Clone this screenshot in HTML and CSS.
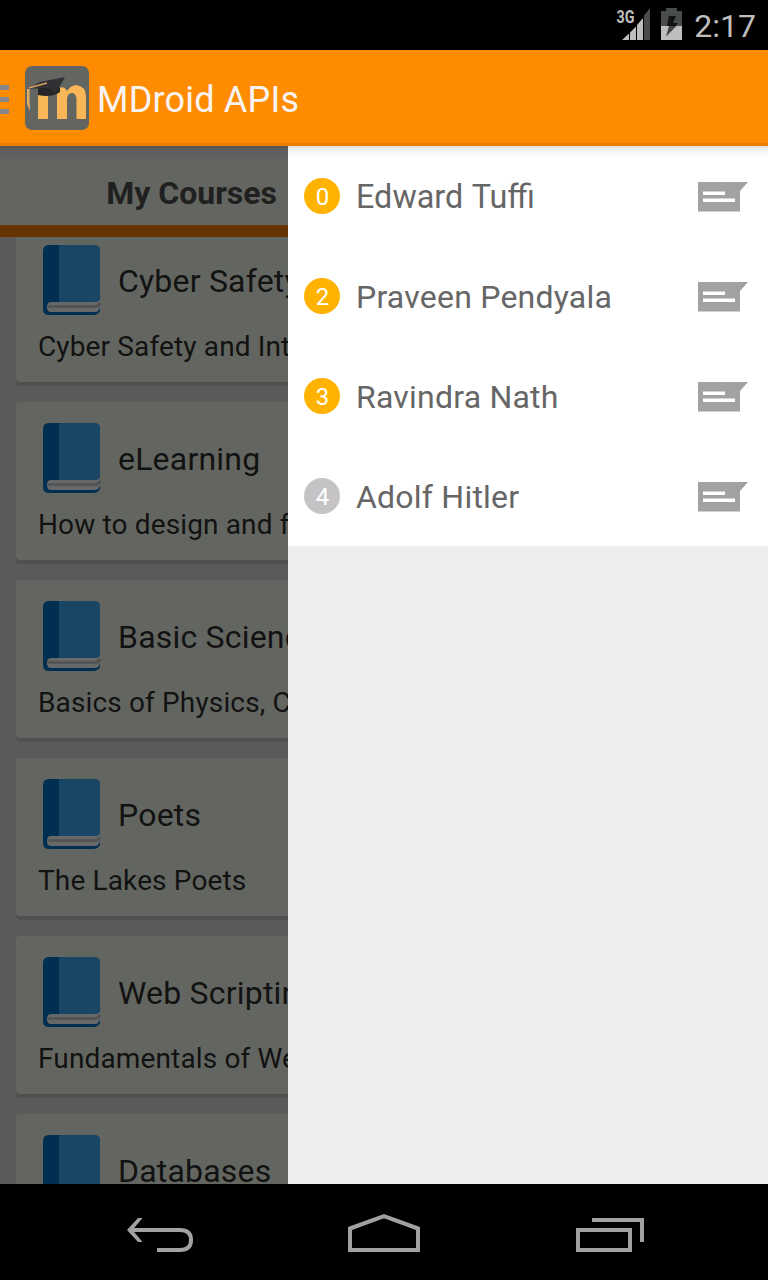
FILE: index.html
```html
<!DOCTYPE html>
<html lang="en">
<head>
<meta charset="utf-8">
<title>MDroid APIs</title>
<link rel="stylesheet" href="styles.css">
</head>
<body>
<svg class="defs" width="0" height="0" aria-hidden="true">
  <symbol id="book" viewBox="0 0 58 70">
    <path fill="#002f51" d="M6 0H51Q57 0 57 6V66Q55 70 50 70H6Q0 70 0 64V6Q0 0 6 0Z"/>
    <path fill="#1a4666" d="M16 0H51Q57 0 57 6V54Q56 57 52 57H16Z"/>
    <path fill="#67686a" d="M8 57H52Q56 57 57 54V62Q56 67 52 67H8Q4 67 4 62Q4 57 8 57Z"/>
    <path fill="none" stroke="#515151" stroke-width="2.5" d="M5 61.500H52Q56 61 57 58"/>
  </symbol>
  <symbol id="message" viewBox="0 0 50 30">
    <path fill="#a3a1a3" d="M0 0H50L42 9V29.500H0Z"/>
    <path fill="#fff" d="M5 9.500H27V13H5ZM5 16.500H37V20H5Z"/>
  </symbol>
</svg>
<div class="phone">
  <header class="status">
    <svg class="signal" width="34" height="34" viewBox="0 0 34 34">
      <path fill="#bebebe" d="M6 33L13 26.500V33ZM14 25.500L20 19.500V33H14ZM21 18L27 11V33H21Z"/>
      <path fill="#494d49" d="M28 8.500L34 1V33H28Z"/>
      <text class="network" x="0.5" y="16" textLength="18" lengthAdjust="spacingAndGlyphs">3G</text>
    </svg>
    <svg class="battery" width="21" height="33" viewBox="0 0 21 33">
      <path fill="#494d49" d="M5 1H16V4H21V19H0V4H5Z"/>
      <path fill="#bebebe" d="M0 19H21V33H0Z"/>
      <path fill="#111" d="M8 9H15L12 16H17L14.500 19H6Z"/>
      <path fill="#414541" d="M8 19H15.500L5 29.500Z"/>
    </svg>
    <span class="clock">2:17</span>
  </header>
  <div class="appbar">
    <svg class="menu" width="9" height="30" viewBox="0 0 9 30"><path fill="#858689" d="M0 0H9V5H0ZM0 12H9V17H0ZM0 24H9V29H0Z"/></svg>
    <svg class="logo" width="64" height="64" viewBox="0 0 64 64">
      <rect width="64" height="64" rx="7" fill="#636660"/>
      <path fill="#f9b657" d="M13 26H23V53H13ZM32 53V24Q38 18 42 25Q46 19 51 19Q61 20 61 31V53H51.500V33Q51 27 47 27Q42 27 42 34V53Z"/>
      <path fill="#252528" d="M13 22Q24 18 35 22V26Q27 32 13 29Z"/>
      <path fill="#303034" d="M3 23L15 16L40 11L31 27Q25 21 18 22Z"/>
      <path fill="none" stroke="#d9a15d" stroke-width="1.500" d="M22 17L4 22"/>
      <path fill="#e4ad61" d="M2 23H4.500V34L5 45L2 38Z"/>
    </svg>
    <h1 class="apptitle">MDroid APIs</h1>
  </div>
  <main class="content">
    <section class="courses">
      <div class="tab">My Courses</div>
      <div class="list">
        <article class="card"><div class="cardhead"><svg class="book"><use href="#book"/></svg><h2>Cyber Safety</h2></div><p>Cyber Safety and Internet</p></article>
        <article class="card"><div class="cardhead"><svg class="book"><use href="#book"/></svg><h2>eLearning</h2></div><p>How to design and facilitate</p></article>
        <article class="card"><div class="cardhead"><svg class="book"><use href="#book"/></svg><h2>Basic Science</h2></div><p>Basics of Physics, Chemistry</p></article>
        <article class="card"><div class="cardhead"><svg class="book"><use href="#book"/></svg><h2>Poets</h2></div><p>The Lakes Poets</p></article>
        <article class="card"><div class="cardhead"><svg class="book"><use href="#book"/></svg><h2>Web Scripting</h2></div><p>Fundamentals of Web</p></article>
        <article class="card"><div class="cardhead"><svg class="book"><use href="#book"/></svg><h2>Databases</h2></div></article>
      </div>
    </section>
    <aside class="drawer">
      <div class="contact"><span class="count">0</span><span class="name ligature">Edward Tuffi</span><svg class="message"><use href="#message"/></svg></div>
      <div class="contact"><span class="count">2</span><span class="name">Praveen Pendyala</span><svg class="message"><use href="#message"/></svg></div>
      <div class="contact"><span class="count">3</span><span class="name">Ravindra Nath</span><svg class="message"><use href="#message"/></svg></div>
      <div class="contact"><span class="count muted">4</span><span class="name">Adolf Hitler</span><svg class="message"><use href="#message"/></svg></div>
    </aside>
  </main>
  <nav class="navbar">
    <svg width="72" height="40" viewBox="0 0 72 40"><path fill="none" stroke="#a3a1a3" stroke-width="4" d="M6 18H56Q67 18 67 28Q67 38 56 38H33"/><path fill="#a3a1a3" d="M3 18L14 6H18.500L8.500 18L18.500 30H14Z"/></svg>
    <svg width="72" height="40" viewBox="0 0 72 40"><path fill="none" stroke="#a3a1a3" stroke-width="4" d="M2 16.500L36 4.200L70 16.500V38H2Z"/></svg>
    <svg width="72" height="40" viewBox="0 0 72 40"><path fill="none" stroke="#a3a1a3" stroke-width="4" d="M2 18H54V38H2ZM16 8H66V30"/></svg>
  </nav>
</div>
</body>
</html>
```
FILE: styles.css
```css
* { box-sizing: border-box; }
body { margin: 0; font-family: Roboto, sans-serif; background: #000; }
h1, h2, p { margin: 0; font-weight: 400; }
svg { display: block; flex: none; }
.defs { display: none; }
.phone { width: 768px; height: 1280px; display: flex; flex-direction: column; overflow: hidden; }
.status { height: 50px; flex: none; display: flex; align-items: flex-start; justify-content: flex-end; padding: 7px 12px 0 0; color: #bebebe; }
.battery { margin: 0 12px 0 11px; }
.network { font: bold 18px Roboto, sans-serif; fill: #bebebe; }
.clock { font-size: 32px; line-height: 38px; }
.appbar { height: 96px; flex: none; display: flex; align-items: center; background: #ff8c00; border-bottom: 3px solid #ed7e00; padding-top: 3px; }
.menu { margin-top: 4px; }
.logo { margin: 0 8px 0 16px; }
.apptitle { margin-top: 4px; color: #f8f3f5; font-size: 36px; line-height: 44px; letter-spacing: .2px; }
.content { flex: 1; min-height: 0; display: grid; grid-template-columns: 288px 480px; background: #eee; }
.courses { background: #5a5a5a; overflow: hidden; display: flex; flex-direction: column; min-height: 0; }
.tab { height: 91px; flex: none; padding: 14px 11px 0 0; border-bottom: 12px solid #653400; background: linear-gradient(#4f5050 0, #5a5b5b 2px, #5f5e60 5px, #636062 12px, #636660 19px); color: #202020; font-size: 32px; line-height: 66px; font-weight: 700; text-align: right; white-space: nowrap; }
.list { flex: 1; min-height: 0; overflow: hidden; padding-left: 16px; display: flex; flex-direction: column; gap: 20px; }
.card { width: 736px; height: 158px; flex: none; padding: 21px 22px 0; border-radius: 4px; background: #636660; box-shadow: 0 4px 0 #505050; color: #121212; }
.card:first-child { margin-top: -13px; }
.cardhead { display: flex; gap: 17px; padding-left: 5px; height: 70px; }
.book { width: 58px; height: 70px; }
.card h2 { font-size: 32px; line-height: 72px; letter-spacing: .2px; white-space: nowrap; }
.card p { font-size: 28px; line-height: 36px; letter-spacing: .14px; margin-top: 14px; white-space: nowrap; }
.contact { height: 100px; display: flex; align-items: center; background: #fff; padding: 0 20px 0 16px; }
.contact:first-child { background: linear-gradient(#dedede, #f5f5f5 4px, #fff 12px); }
.count { width: 36px; height: 36px; border-radius: 50%; background: #ffb300; color: #fff; font-size: 24px; line-height: 38px; text-align: center; padding-left: 1px; }
.muted { background: #c5c3c6; }
.name { flex: 1; margin: 1px 0 0 16px; font-size: 32px; line-height: 40px; letter-spacing: .22px; color: #666; white-space: nowrap; }
.ligature { letter-spacing: 0; word-spacing: 1px; font-size: 32.4px; }
.message { width: 50px; height: 30px; margin-top: 2px; }
.navbar { height: 96px; flex: none; display: flex; gap: 152px; padding: 28px 0 0 124px; background: #000; }
.navbar svg:last-child { margin-left: 4px; }
```
